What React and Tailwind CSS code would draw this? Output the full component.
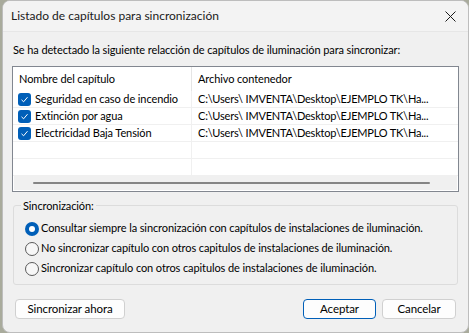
import React from 'react';

const rows = [
  { name: 'Seguridad en caso de incendio', file: 'C:\\Users\\ IMVENTA\\Desktop\\EJEMPLO TK\\Ha...' },
  { name: 'Extinción por agua', file: 'C:\\Users\\ IMVENTA\\Desktop\\EJEMPLO TK\\Ha...' },
  { name: 'Electricidad Baja Tensión', file: 'C:\\Users\\ IMVENTA\\Desktop\\EJEMPLO TK\\Ha...' },
];

const options = [
  'Consultar siempre la sincronización con capítulos de instalaciones de iluminación.',
  'No sincronizar capítulo con otros capitulos de instalaciones de iluminación.',
  'Sincronizar capítulo con otros capitulos de instalaciones de iluminación.',
];

const Check = () => (
  <span className="w-[13px] h-[13px] rounded-[3px] bg-[#005fb8] flex items-center justify-center shrink-0">
    <svg width="9" height="9" viewBox="0 0 9 9">
      <path d="M1.5 4.8 L3.6 6.8 L7.5 2.2" fill="none" stroke="#fff" strokeWidth="1" />
    </svg>
  </span>
);

const Radio = ({ on }) =>
  on ? (
    <span className="w-[14px] h-[14px] rounded-full bg-[#005fb8] flex items-center justify-center shrink-0">
      <span className="w-[6px] h-[6px] rounded-full bg-white" />
    </span>
  ) : (
    <span className="w-[14px] h-[14px] rounded-full border border-[#5a5a5a] bg-[#f7f7f7] shrink-0" />
  );

const Btn = ({ children, primary, className = '' }) => (
  <button
    className={`h-[20px] rounded-[4px] bg-[#fdfdfd] text-[11.5px] text-black whitespace-nowrap ${
      primary ? 'border border-[#005fb8]' : 'border border-[#d0d0d0]'
    } ${className}`}
  >
    {children}
  </button>
);

export default function App() {
  return (
    <div
      className="w-[469px] h-[333px] bg-[#a9ab9c] pl-[2px] whitespace-nowrap tracking-[-0.1px]"
      style={{ fontFamily: 'Lato, "Liberation Sans", Arial, sans-serif' }}
    >
      <div className="w-[467px] h-[333px] rounded-[8px] border border-[#bdbdbd] bg-[#f0f0f0] flex flex-col overflow-hidden">
        {/* Title bar */}
        <div className="h-[31px] bg-[#f3f3f3] border-b border-[#e6e6e6] flex items-center justify-between pl-[8px] pr-[12px] shrink-0">
          <span className="text-[12px] tracking-normal text-[#1a1a1a]">Listado de capítulos para sincronización</span>
          <svg width="11" height="11" viewBox="0 0 11 11">
            <path d="M0.5 0.5 L10.5 10.5 M10.5 0.5 L0.5 10.5" stroke="#1a1a1a" strokeWidth="1" />
          </svg>
        </div>

        <div className="flex flex-col px-[9px] pt-[10px] text-[11px]">
          <p className="text-black leading-[15px] pl-[1px]">
            Se ha detectado la siguiente relacción de capítulos de iluminación para sincronizar:
          </p>

          {/* List view */}
          <div className="mt-[9px] h-[126px] border border-[#828790] bg-white flex flex-col">
            <div className="h-[24px] flex text-black items-center shrink-0">
              <div className="w-[179px] pl-[6px] border-r border-[#e5e5e5] h-full flex items-center">Nombre del capítulo</div>
              <div className="pl-[6px]">Archivo contenedor</div>
            </div>
            {rows.map((r) => (
              <div key={r.name} className="h-[17px] flex items-center text-black border-b border-[#f0f0f0]">
                <div className="w-[179px] pl-[5px] flex items-center gap-[4px] border-r border-[#f0f0f0] h-full">
                  <Check />
                  <span>{r.name}</span>
                </div>
                <div className="pl-[6px] tracking-[-0.2px]">{r.file}</div>
              </div>
            ))}
            {[0, 1].map((i) => (
              <div key={i} className="h-[17px] flex border-b border-[#f0f0f0]">
                <div className="w-[179px] border-r border-[#f0f0f0] h-full" />
              </div>
            ))}
            <div className="flex-1 bg-[#f0f0f0] flex items-center px-[19px] mx-[1px] mb-[1px]">
              <div className="h-[2px] w-[397px] bg-[#858585] rounded-full" />
            </div>
          </div>

          {/* Group box */}
          <div className="mt-[13px] mx-[1px] h-[80px] border border-[#dcdcdc] rounded-[3px] relative px-[11px] pt-[14px]">
            <span className="absolute -top-[8px] left-[7px] px-[2px] bg-[#f0f0f0] text-black leading-[15px]">
              Sincronización:
            </span>
            <div className="flex flex-col gap-[3px]">
              {options.map((o, i) => (
                <div key={o} className="flex items-center gap-[2px] h-[17px] text-black">
                  <Radio on={i === 0} />
                  <span>{o}</span>
                </div>
              ))}
            </div>
          </div>

          {/* Buttons */}
          <div className="mt-[14px] flex items-center px-[3px]">
            <Btn className="w-[110px]">Sincronizar ahora</Btn>
            <div className="flex-1" />
            <Btn primary className="w-[73px]">Aceptar</Btn>
            <Btn className="w-[74px] ml-[6px]">Cancelar</Btn>
          </div>
        </div>
      </div>
    </div>
  );
}
